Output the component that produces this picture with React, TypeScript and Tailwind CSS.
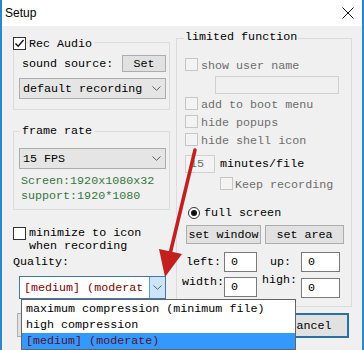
import React from "react";

// Small win32-style building blocks
function Check({ checked, disabled }: { checked?: boolean; disabled?: boolean }) {
  return (
    <span
      className={`flex h-[13px] w-[13px] shrink-0 items-center justify-center border ${
        disabled ? "border-[#c6c6c6] bg-[#f3f3f3]" : "border-[#333333] bg-white"
      }`}
    >
      {checked && (
        <svg width="11" height="11" viewBox="0 0 11 11">
          <polyline points="1.5,5.5 4.2,8.3 9.5,2" fill="none" stroke="#111" strokeWidth="1.4" />
        </svg>
      )}
    </span>
  );
}

function Chevron() {
  return (
    <svg width="9" height="5" viewBox="0 0 9 5" className="shrink-0">
      <polyline points="0.5,0.5 4.5,4.3 8.5,0.5" fill="none" stroke="#606060" strokeWidth="1" />
    </svg>
  );
}

function Combo({ label }: { label: string }) {
  return (
    <div className="ml-[5px] flex h-[21px] w-[147px] items-center justify-between border border-[#adadad] bg-[#e5e5e5] pl-[3px] pr-[4px]">
      <span>{label}</span>
      <Chevron />
    </div>
  );
}

function Btn({ label, w, h }: { label: string; w: string; h: string }) {
  return (
    <div className={`flex items-center justify-center border border-[#adadad] bg-[#e1e1e1] ${w} ${h}`}>
      {label}
    </div>
  );
}

function Field({ value, w }: { value: string; w: string }) {
  return (
    <div className={`flex h-[20px] items-center border border-[#7a7a7a] bg-white pl-[6px] ${w}`}>{value}</div>
  );
}

function DisabledRow({ label, mt }: { label: string; mt: string }) {
  return (
    <div className={`ml-[8px] flex h-[13px] items-center ${mt}`}>
      <Check disabled />
      <span className="ml-[3px] mt-[2px] text-[#6d6d6d]">{label}</span>
    </div>
  );
}

const qualityItems = [
  "maximum compression (minimum file)",
  "high compression",
  "[medium] (moderate)",
];

export default function App() {
  return (
    <div className="relative flex h-[350px] w-[364px] flex-col overflow-hidden border-x-2 border-[#2b87c9] bg-white font-['Liberation_Mono',monospace] text-[11.7px] leading-[14px] text-black">
      {/* Title bar */}
      <div className="flex h-[26px] shrink-0 items-center justify-between bg-white pl-[3px] pr-[8px]">
        <span className="font-['Liberation_Sans',Arial,sans-serif] text-[12px]">Setup</span>
        <svg width="12" height="12" viewBox="0 0 12 12">
          <path d="M0.5 0.5 L11.5 11.5 M11.5 0.5 L0.5 11.5" stroke="#111" strokeWidth="1" />
        </svg>
      </div>

      {/* Body */}
      <div className="flex flex-1 flex-col bg-[#f0f0f0] pl-[11px] pr-[10px]">
        <div className="flex items-start gap-[6px]">
          {/* Left column */}
          <div className="flex w-[157px] flex-col">
            <div className="mt-[16px] flex flex-col border border-[#dcdcdc] pb-[10px]">
              <div className="-ml-px -mt-[6px] flex h-[13px] items-center">
                <Check checked />
                <span className="ml-[3px] bg-[#f0f0f0] pr-[2px]">Rec Audio</span>
              </div>
              <div className="mt-[5px] flex items-center justify-between pl-[8px] pr-[3px]">
                <span>sound source:</span>
                <Btn label="Set" w="w-[44px]" h="h-[17px]" />
              </div>
              <div className="mt-[6px]">
                <Combo label="default recording" />
              </div>
            </div>

            <div className="mt-[21px] flex flex-col border border-[#dcdcdc] pb-[6px]">
              <span className="-mt-[8px] ml-[6px] w-fit bg-[#f0f0f0] px-[2px]">frame rate</span>
              <div className="mt-[10px]">
                <Combo label="15 FPS" />
              </div>
              <div className="mt-[5px] pl-[7px] leading-[14.5px] text-[#37763f]">
                <div>Screen:1920x1080x32</div>
                <div>support:1920*1080</div>
              </div>
            </div>

            <div className="mt-[17px] flex items-start">
              <Check />
              <div className="ml-[3px] leading-[12.5px]">
                <div>minimize to icon</div>
                <div>when recording</div>
              </div>
            </div>
            <div className="mt-[3px]">Quality:</div>
            <div className="ml-[6px] mt-[7px] flex h-[23px] w-[147px] items-stretch border border-[#3c78b4] bg-white">
              <span className="flex flex-1 items-center pl-[4px] text-[#800000]">[medium] (moderat</span>
              <span className="flex w-[16px] items-center justify-center border-l border-[#569de5] bg-[#cce4f7]">
                <Chevron />
              </span>
            </div>
          </div>

          {/* Right column */}
          <div className="mt-[12px] flex w-[176px] flex-col border border-[#dcdcdc] pb-[8px]">
            <span className="-mt-[9px] ml-[7px] w-fit bg-[#f0f0f0] px-px">limited function</span>
            <DisabledRow label="show user name" mt="mt-[14px]" />
            <div className="ml-[38px] mt-[5px] h-[18px] w-[124px] border border-[#d0d0d0] bg-[#f0f0f0]" />
            <DisabledRow label="add to boot menu" mt="mt-[3px]" />
            <DisabledRow label="hide popups" mt="mt-[5px]" />
            <DisabledRow label="hide shell icon" mt="mt-[5px]" />

            <div className="ml-[8px] mt-[9px] flex items-center">
              <div className="flex h-[18px] w-[30px] items-center border border-[#d0d0d0] bg-[#f3f3f3] pl-[4px] text-[#6d6d6d]">
                15
              </div>
              <span className="ml-[5px]">minutes/file</span>
            </div>
            <div className="ml-[43px] mt-[4px] flex h-[13px] items-center">
              <Check disabled />
              <span className="ml-[2px] mt-[3px] text-[#6d6d6d]">Keep recording</span>
            </div>

            <div className="ml-[11px] mt-[17px] flex h-[12px] items-center">
              <span className="flex h-[12px] w-[12px] items-center justify-center rounded-full border border-[#333333] bg-white">
                <span className="h-[6px] w-[6px] rounded-full bg-[#111]" />
              </span>
              <span className="ml-[4px]">full screen</span>
            </div>

            <div className="ml-[9px] mt-[6px] flex gap-[4px]">
              <Btn label="set window" w="w-[75px]" h="h-[19px]" />
              <Btn label="set area" w="w-[79px]" h="h-[19px]" />
            </div>

            <div className="ml-[9px] mt-[8px] flex items-center">
              <span className="w-[38px]">left:</span>
              <Field value="0" w="w-[33px]" />
              <span className="w-[44px] pl-[13px]">up:</span>
              <Field value="0" w="w-[39px]" />
            </div>
            <div className="ml-[5px] mt-[5px] flex items-start">
              <span className="-mt-[2px] w-[42px]">width:</span>
              <Field value="0" w="w-[33px]" />
              <span className="-mt-[4px] w-[44px] pl-[5px]">high:</span>
              <div className="mt-px">
                <Field value="0" w="w-[39px]" />
              </div>
            </div>
          </div>
        </div>

        {/* Dialog buttons (OK is hidden under the open list) */}
        <div className="mt-[6px] flex items-start justify-between pl-[4px] pr-[3px]">
          <Btn label="" w="w-[77px]" h="h-[24px]" />
          <div className="flex h-[25px] w-[77px] items-center justify-center border-2 border-[#2a6fa8] bg-[#e1e1e1]">
            Cancel
          </div>
        </div>
      </div>

      {/* Open drop-down list of the Quality combo */}
      <div className="absolute left-[19px] top-[299px] w-[275px] border border-[#646464] bg-white pt-px">
        {qualityItems.map((item, i) => (
          <div
            key={item}
            className={`h-[16px] pl-[4px] leading-[16px] ${i === 2 ? "bg-[#3399ff] text-[#5a1030]" : ""}`}
          >
            {item}
          </div>
        ))}
      </div>

      {/* Red annotation arrow */}
      <svg className="pointer-events-none absolute left-0 top-0" width="364" height="350" viewBox="0 0 364 350">
        <line x1="193" y1="150" x2="168.5" y2="252" stroke="#c41f1f" strokeWidth="3.5" strokeLinecap="round" />
        <polygon points="163,277 157,249 180,254" fill="#c41f1f" />
      </svg>
    </div>
  );
}
